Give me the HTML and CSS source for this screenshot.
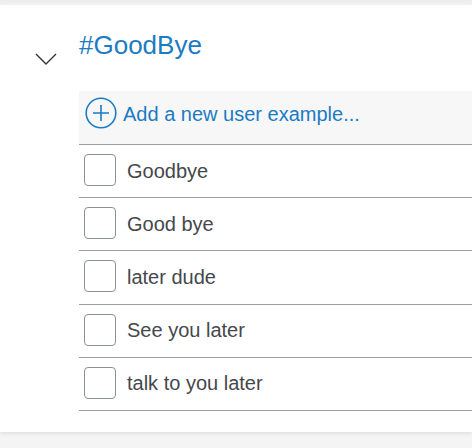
FILE: index.html
```html
<!DOCTYPE html>
<html>
<head>
<meta charset="utf-8">
<link rel="stylesheet" href="styles.css">
</head>
<body>
<div class="card">
  <div class="toggle">
    <svg width="22" height="12" viewBox="0 0 22 12"><path d="M1 1 L11 11 L21 1" fill="none" stroke="#333" stroke-width="1.4"/></svg>
  </div>
  <div class="content">
    <h1 class="title">#GoodBye</h1>
    <div class="add-row">
      <svg class="plus" width="32" height="32" viewBox="0 0 32 32"><circle cx="16" cy="16" r="14.8" fill="none" stroke="#1b7bc3" stroke-width="1.6"/><path d="M16 8 V24 M8 16 H24" stroke="#1b7bc3" stroke-width="1.6"/></svg>
      <span class="add-text">Add a new user example...</span>
    </div>
    <div class="item"><span class="box"></span><span class="label">Goodbye</span></div>
    <div class="item"><span class="box"></span><span class="label">Good bye</span></div>
    <div class="item"><span class="box"></span><span class="label">later dude</span></div>
    <div class="item"><span class="box"></span><span class="label">See you later</span></div>
    <div class="item"><span class="box"></span><span class="label">talk to you later</span></div>
  </div>
</div>
</body>
</html>
```

FILE: styles.css
```css
html, body {
  margin: 0;
  padding: 0;
}
body {
  background: linear-gradient(#ececec, #f4f4f4 6px);
  padding-top: 5px;
  height: 448px;
  box-sizing: border-box;
  font-family: "Liberation Sans", Arial, sans-serif;
  overflow: hidden;
}
.card {
  background: #fff;
  height: 427px;
  display: flex;
  box-shadow: 0 2px 3px rgba(0,0,0,0.08);
}
.toggle {
  width: 79px;
  box-sizing: border-box;
  padding-left: 35px;
  padding-top: 48px;
}
.toggle svg { display: block; }
.content {
  flex: 1;
  display: flex;
  flex-direction: column;
}
.title {
  margin: 25px 0 0 0;
  font-size: 26px;
  line-height: 30px;
  font-weight: normal;
  color: #1b7bc3;
  height: 61px;
}
.add-row {
  background: #f7f7f7;
  height: 54px;
  box-sizing: border-box;
  border-bottom: 1px solid #9c9fa0;
  display: flex;
  align-items: flex-start;
}
.plus {
  margin: 6px 0 0 6px;
  display: block;
}
.add-text {
  margin: 12px 0 0 6px;
  font-size: 20px;
  line-height: 23px;
  color: #1b7bc3;
}
.item {
  height: 53.2px;
  box-sizing: border-box;
  border-bottom: 1px solid #9c9fa0;
  display: flex;
  align-items: center;
}
.box {
  width: 32px;
  height: 32px;
  box-sizing: border-box;
  border: 1px solid #899293;
  border-radius: 4px;
  margin-left: 5px;
  margin-top: -2px;
}
.label {
  margin-left: 11px;
  font-size: 20px;
  line-height: 23px;
  color: #44484c;
}
```
